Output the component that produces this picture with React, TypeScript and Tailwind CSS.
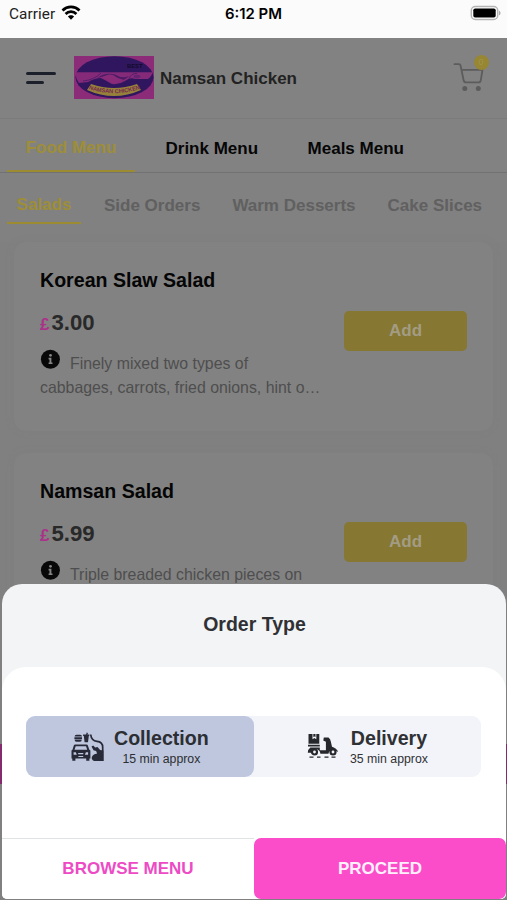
import React from "react";

const categories = [
  { label: "Side Orders", gap: "ml-[23px]" },
  { label: "Warm Desserts", gap: "ml-8" },
  { label: "Cake Slices", gap: "ml-8" },
];

const items = [
  { name: "Korean Slaw Salad", price: "3.00", lines: ["Finely mixed two types of", "cabbages, carrots, fried onions, hint o…"] },
  { name: "Namsan Salad", price: "5.99", lines: ["Triple breaded chicken pieces on", ""] },
];

function StatusBar() {
  return (
    <div className="relative flex h-[38px] shrink-0 items-start justify-between bg-[#fbfbfb] font-[Inter,Roboto,sans-serif] text-black">
      <div className="flex items-center gap-[6px] pl-[9px] pt-[4px]">
        <span className="font-[Roboto,sans-serif] text-[15.3px] leading-5 tracking-[0.1px] text-[#222]">Carrier</span>
        <svg width="20" height="15" viewBox="0 0 20 15" className="-mt-[3px]" fill="none" stroke="#000" strokeWidth="2.8">
          <path d="M1.5 5.4C6.2.8 13.8.8 18.5 5.4" />
          <path d="M4.6 8.9c2.9-2.9 7.9-2.9 10.8 0" />
          <path d="M10 14.7 6.9 11.5c1.6-1.8 4.6-1.8 6.2 0Z" fill="#000" stroke="none" />
        </svg>
      </div>
      <span className="absolute left-[225px] top-[4px] whitespace-nowrap text-[14.9px] font-semibold leading-5">6:12 PM</span>
      <svg width="32" height="16" viewBox="0 0 32 16" className="mr-[5px] mt-[5px]">
        <rect x="1.3" y="1.5" width="26.4" height="13" rx="4" fill="#fff" stroke="#b5b5b5" strokeWidth="1.5" />
        <rect x="3.3" y="3.5" width="22.4" height="9" rx="1.8" fill="#000" />
        <path d="M29 5.7c2 .6 2 4 0 4.6Z" fill="#adadad" />
      </svg>
    </div>
  );
}

function Logo() {
  return (
    <svg width="80" height="43" viewBox="0 0 80 43" className="-mt-[2px] ml-[18px]">
      <rect width="80" height="43" fill="#8c2c79" />
      <ellipse cx="40.5" cy="21.2" rx="39" ry="21" fill="#30165f" />
      <path d="M2 16.3H78.5Q78 20 74 23H61Q56 21 51 25Q45 29 38 28Q31 24 27 22Q21 22 14 26L5 27Q1 22 2 16.3Z" fill="#842a78" />
      <path d="M9 25Q20 24 27 17M55 23Q57 17 63 17.5" fill="none" stroke="#541e6b" strokeWidth="1" />
      <path d="M23 22Q31 16 41 18.5Q48 23 55 20Q49 26 43 25Q38 19 31 20Z" fill="#4b1b67" />
      <path d="M27 22Q34 17 39 19Q44 23 50 24Q44 28 37 27Q32 22 27 22Z" fill="#8a2b79" />
      <ellipse cx="63" cy="20.5" rx="3.3" ry="1.8" fill="#652371" />
      <path d="M17 28Q40 36 63 28L67 34Q40 46 13 34Z" fill="#96813b" />
      <path id="logo-arc" d="M16 33.3Q40 41 65 33.3" fill="none" />
      <text fontFamily="Liberation Sans" fontSize="5.7" fontWeight="bold" fill="#75284f">
        <textPath href="#logo-arc" startOffset="50%" textAnchor="middle">NAMSAN CHICKEN</textPath>
      </text>
      <text x="53" y="12" fontFamily="Liberation Sans" fontSize="5.8" fontWeight="bold" fill="#120a2b">BEST</text>
    </svg>
  );
}

function Cart() {
  return (
    <div className="relative mr-[20px] h-10 w-[34px]">
      <svg width="34" height="34" viewBox="0 0 34 34" className="mt-[2px]" fill="none" stroke="#5c5c5c" strokeWidth="1.8" strokeLinecap="round" strokeLinejoin="round">
        <path d="M1.5 4.2H6Q7.3 4.2 7.6 5.7L10.6 20.2Q11.1 22.4 13 22.4H25.5Q27.3 22.4 27.8 20.2L29.5 9.8H8.5" />
        <circle cx="11.8" cy="28.6" r="1.6" fill="#5c5c5c" />
        <circle cx="25.3" cy="28.6" r="1.6" fill="#5c5c5c" />
      </svg>
      <span className="absolute left-[20.5px] top-[-3px] flex h-[15px] w-[15px] items-center justify-center rounded-full bg-[#978632] text-[9px] text-[#a1954c]">0</span>
    </div>
  );
}

function FoodCard({ name, price, lines }: { name: string; price: string; lines: string[] }) {
  return (
    <article className="mx-[14px] mb-[22px] flex h-[189px] shrink-0 justify-between rounded-xl bg-[#828282] shadow-[0_0_6px_#7e7e7e]">
      <div className="pl-[26px] pt-[26px]">
        <h2 className="whitespace-nowrap text-[19.6px] font-bold leading-6 text-[#050505]">{name}</h2>
        <p className="mt-[17px] flex items-baseline font-bold leading-7 text-[#292929]">
          <span className="mr-[2px] text-[17px] text-[#ab3289]">£</span>
          <span className="text-[22.2px]">{price}</span>
        </p>
        <div className="mt-[13px] whitespace-nowrap text-[15.87px] leading-[24px] text-[#4e4e4e]">
          <div className="flex">
            <svg width="21" height="21" viewBox="0 0 21 21" className="-mt-[3px] mr-[9px]">
              <circle cx="10.4" cy="10.3" r="9.5" fill="#080808" />
              <circle cx="10.5" cy="6.3" r="1.4" fill="#858585" />
              <path d="M8.6 8.8h2.8v4.6h1.1v1.6H8.6v-1.6h.9v-3H8.6Z" fill="#858585" />
            </svg>
            {lines[0]}
          </div>
          <div>{lines[1]}</div>
        </div>
      </div>
      <button className="mr-[26px] mt-[69px] h-10 w-[123px] rounded-[5px] bg-[#867732] text-[17px] font-bold text-[#a39c84]">Add</button>
    </article>
  );
}

function CollectionIcon() {
  return (
    <svg width="33" height="30" viewBox="0 0 33 30" fill="#292a38">
      <path d="M3.6 4.6Q3.6 2.8 5.6 2.8h3.4Q11 2.8 11 4.6ZM3.4 5.3H11v1.6H3.4ZM3.6 7.6h7.2q0 2.2-1.8 2.2H5.4q-1.8 0-1.8-2.2Z" />
      <path d="M12.1 2.5h6.2V4h-.5l-.8 6.3h-3.4L12.8 4h-.7ZM15.1 2.6l.6-2 1.3.3-.7 1.9Z" />
      <path d="M19.7 2.5C20.1 6.2 22 9 26 9.3c4 .3 5.7 2.3 5.7 6V29" fill="none" stroke="#292a38" strokeWidth="1.7" />
      <path fillRule="evenodd" d="M4.2 12.5h11.2q1.2 0 1.5 1l1.3 4 1.2.9v8.1h-1v2.3h-3.2v-2.3H4.4v2.3H1.3v-2.3H.5v-8.1l1.1-.9 1.2-4q.3-1 1.4-1Zm.5 1.8-1.2 3.5h12.7L15 14.3ZM2.6 20.3v2.5h3.2l-1-2.5Zm12.3 0-1 2.5h3.2v-2.5Zm-7.5 2h4.7l.4-1.2H7Zm0 1.6v1h4.8v-1Z" />
      <path d="m20.5 14.6 1.7-1 2 2 2.3-.6 2.6 2.9 3.3.7V29H23q-2.8-1.4-2.2-3.7.5-2.2 2.6-3l2.7-.9-1-2.5-2.6-.7Z" />
    </svg>
  );
}

function DeliveryIcon() {
  return (
    <svg width="32" height="27" viewBox="0 0 32 27" fill="#25272c">
      <path d="M1.5 1h4v5.2l1.9-1.1 1.9 1.1V1h3v9.7H1.5ZM6.3 1h2.2v3l-1.1-.6-1.1.6ZM1 11.7h11.8v1.9H1Z" />
      <path d="M16.8 4.6h4.7q2 1.6 2.3 4l1.2 5.2 2.8 1.3-1.2 1.7q-4.2-.3-5.2 4h-8q-.4-4.4-4.9-4.8-4 .4-4.5 3.8H.8q.2-3.6 2.5-5.2h9.5v2.7h6.1V8.8l-2.6-1.3Z" />
      <circle cx="7.5" cy="19" r="2.5" fill="none" stroke="#25272c" strokeWidth="2.2" />
      <circle cx="26" cy="19" r="2.5" fill="none" stroke="#25272c" strokeWidth="2.2" />
      <path d="M23 16.2q4.5-2.2 7.6 2.3" fill="none" stroke="#25272c" strokeWidth="1.2" />
      <path d="M2.5 24.2h4m3.5 0h3.5m4 0h4m3 0h4" stroke="#25272c" strokeWidth="1.3" />
    </svg>
  );
}

function OrderSheet() {
  return (
    <section className="absolute bottom-[1px] left-[2px] right-[1px] flex h-[315px] flex-col overflow-hidden rounded-b-[5px] rounded-t-[20px] bg-[#f2f4f5]">
      <h2 className="h-[83px] shrink-0 pl-[1px] pt-[28px] text-center text-[19.5px] font-bold leading-6 text-[#303134]">Order Type</h2>
      <div className="flex min-h-0 flex-1 flex-col rounded-t-[24px] bg-white">
        <div className="ml-[24px] mr-[25px] mt-[49px] flex h-[61px] rounded-[9px] bg-[#f2f4fa]">
          <button className="flex w-[228px] items-center rounded-[9px] bg-[#bfc7de] pl-[45px] text-[#2b2e32]">
            <CollectionIcon />
            <span className="ml-[10px] flex flex-col items-center pt-[2px]">
              <b className="text-[19.6px] leading-[23px]">Collection</b>
              <span className="text-[12.3px] leading-[18px]">15 min approx</span>
            </span>
          </button>
          <button className="flex items-center pl-[53px] text-[#303134]">
            <DeliveryIcon />
            <span className="ml-[11px] flex flex-col items-center pt-[2px]">
              <b className="text-[19.6px] leading-[23px]">Delivery</b>
              <span className="text-[12.3px] leading-[18px]">35 min approx</span>
            </span>
          </button>
        </div>
        <div className="mt-auto flex h-[61px] text-[17px] font-bold">
          <button className="w-[252px] border-t border-[#dfe3e3] text-[#ed4bc5]">BROWSE MENU</button>
          <button className="flex-1 rounded-[7px] bg-[#fb4dca] text-[#fff0fc]">PROCEED</button>
        </div>
      </div>
    </section>
  );
}

export default function App() {
  return (
    <main className="relative flex h-[900px] w-[507px] flex-col overflow-hidden bg-[#808080] font-['Liberation_Sans',Arial,sans-serif]">
      <StatusBar />
      <header className="flex h-[81px] shrink-0 items-center border-b border-[#7b7b7b] bg-[#828282]">
        <div className="ml-[26px] flex w-[30px] flex-col gap-[6px]">
          <span className="h-[3px] w-[30px] rounded-full bg-[#1c202b]" />
          <span className="h-[3px] w-[18px] rounded-full bg-[#1c202b]" />
        </div>
        <Logo />
        <h1 className="ml-[6px] flex-1 whitespace-nowrap pt-[1px] text-[17px] font-bold text-[#222]">Namsan Chicken</h1>
        <Cart />
      </header>
      <nav className="flex h-[54px] shrink-0 border-b border-[#727272] bg-[#828282] pl-[7px] text-[17px] font-bold leading-6 text-[#060606]">
        <span className="h-[53px] w-[128px] border-b-2 border-[#9c8b30] pt-[17px] text-center text-[#9e8e38]">Food Menu</span>
        <span className="ml-[30.5px] pt-[18px]">Drink Menu</span>
        <span className="ml-[49.5px] pt-[18px]">Meals Menu</span>
      </nav>
      <nav className="flex h-[69px] shrink-0 whitespace-nowrap bg-[#818181] pl-[7px] text-[17px] font-bold leading-6 text-[#606060]">
        <span className="h-[51px] w-[74px] border-b-2 border-[#9c8b30] pt-[20px] text-center text-[#9e8e38]">Salads</span>
        {categories.map((c) => <span key={c.label} className={`${c.gap} pt-[21px]`}>{c.label}</span>)}
      </nav>
      {items.map((item) => <FoodCard key={item.name} {...item} />)}
      <div className="absolute left-0 right-0 top-[744px] h-10 bg-[#842b6d]" />
      <OrderSheet />
    </main>
  );
}
